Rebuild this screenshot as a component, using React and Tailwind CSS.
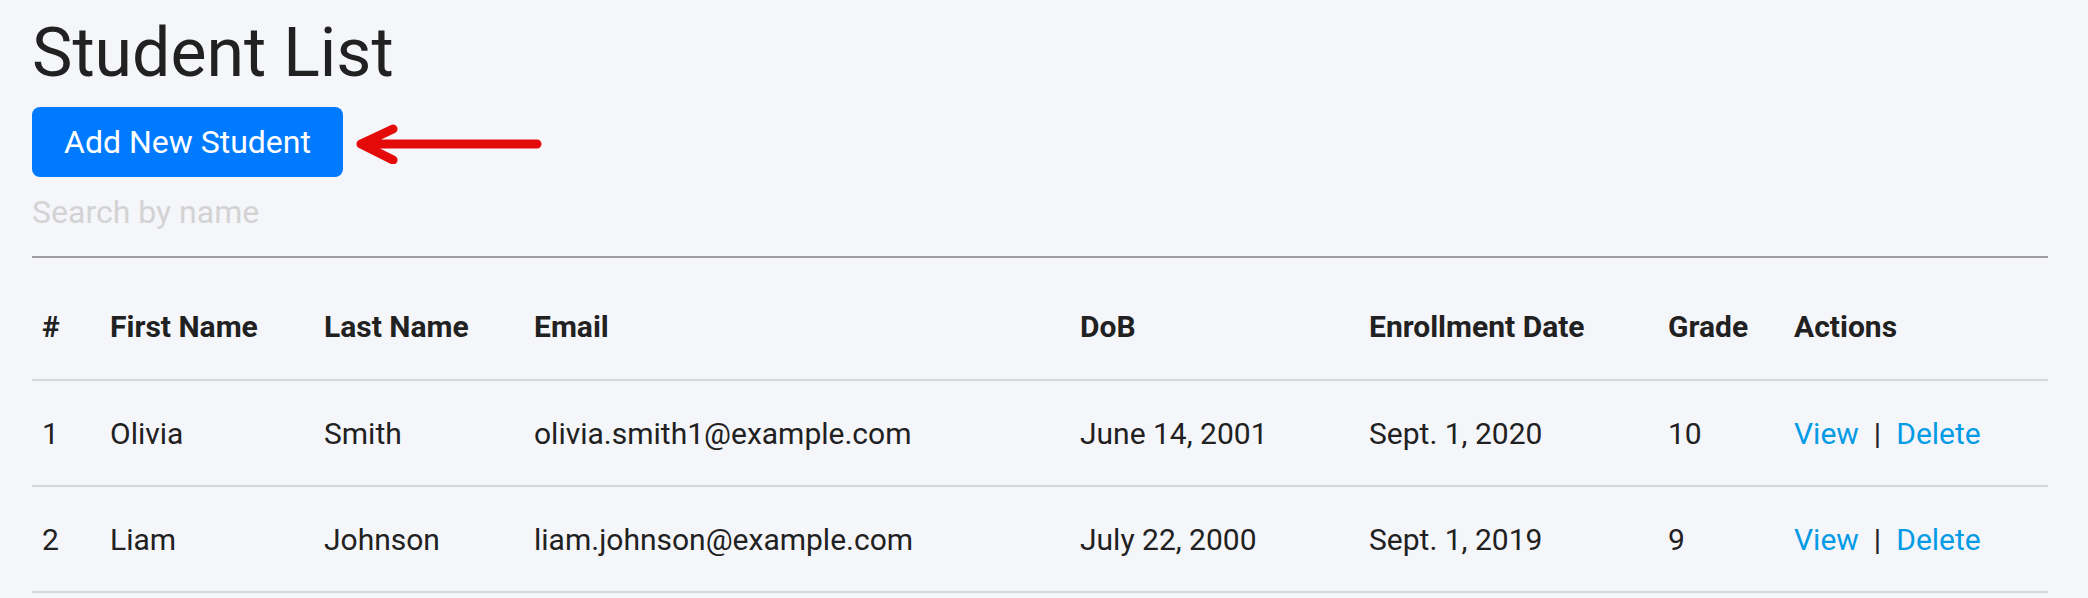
import React from "react";

const students = [
  { id: 1, first: "Olivia", last: "Smith", email: "olivia.smith1@example.com", dob: "June 14, 2001", enrolled: "Sept. 1, 2020", grade: "10" },
  { id: 2, first: "Liam", last: "Johnson", email: "liam.johnson@example.com", dob: "July 22, 2000", enrolled: "Sept. 1, 2019", grade: "9" },
];

const headers = ["#", "First Name", "Last Name", "Email", "DoB", "Enrollment Date", "Grade", "Actions"];

export default function App() {
  return (
    <div className="min-h-[598px] w-full bg-[#f5f6fa] pl-[32px] pr-[40px] pt-[19px] text-[#212121]" style={{ fontFamily: "Roboto, 'Liberation Sans', sans-serif" }}>
      <h1 className="text-[68px] leading-[68px] font-normal">Student List</h1>
      <div className="mt-[20px] flex items-center">
        <button className="h-[70px] rounded-[8px] bg-[#007bff] px-[32px] text-[32px] leading-none text-white">
          Add New Student
        </button>
        <svg className="ml-[10px]" width="190" height="44" viewBox="0 0 190 44" fill="none">
          <path d="M184 24 L8 24 M40 9 L8 24 L40 40" stroke="#e50a0a" strokeWidth="9" strokeLinecap="round" strokeLinejoin="round" />
        </svg>
      </div>
      <input
        type="text"
        placeholder="Search by name"
        className="mt-[11px] block h-[70px] w-full border-0 border-b-2 border-[#9e9e9e] bg-transparent pb-[20px] text-[32px] leading-[48px] outline-none placeholder:text-[#d3d3d3]"
      />
      <table className="mt-[16px] w-full table-fixed border-collapse text-left text-[30px]">
        <colgroup>
          <col className="w-[68px]" />
          <col className="w-[214px]" />
          <col className="w-[210px]" />
          <col className="w-[546px]" />
          <col className="w-[289px]" />
          <col className="w-[299px]" />
          <col className="w-[126px]" />
          <col className="w-[264px]" />
        </colgroup>
        <thead>
          <tr className="border-b-2 border-[#d6d7db]">
            {headers.map((h) => (
              <th key={h} className="h-[106px] pl-[10px] font-bold align-middle">{h}</th>
            ))}
          </tr>
        </thead>
        <tbody>
          {students.map((s) => (
            <tr key={s.id} className="border-b-2 border-[#d6d7db]">
              <td className="h-[106px] pl-[10px] align-middle">{s.id}</td>
              <td className="pl-[10px] align-middle">{s.first}</td>
              <td className="pl-[10px] align-middle">{s.last}</td>
              <td className="pl-[10px] align-middle">{s.email}</td>
              <td className="pl-[10px] align-middle">{s.dob}</td>
              <td className="pl-[10px] align-middle">{s.enrolled}</td>
              <td className="pl-[10px] align-middle">{s.grade}</td>
              <td className="pl-[10px] align-middle">
                <a href="#" className="text-[#039be5]">View</a>
                <span className="mx-[15px]">|</span>
                <a href="#" className="text-[#039be5]">Delete</a>
              </td>
            </tr>
          ))}
        </tbody>
      </table>
    </div>
  );
}
